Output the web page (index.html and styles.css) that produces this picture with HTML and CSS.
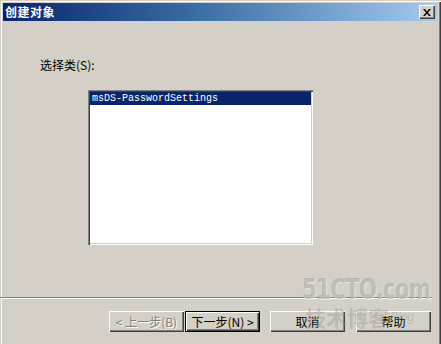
FILE: index.html
```html
<!DOCTYPE html>
<html>
<head>
<meta charset="utf-8">
<link rel="stylesheet" href="styles.css">
</head>
<body>
<div class="window">
  <div class="titlebar">
    <span class="title">创建对象</span>
    <span class="close"><svg width="8" height="7" viewBox="0 0 8 7"><path d="M0 0h2l2 2.5L6 0h2L5 3.5 8 7H6L4 4.5 2 7H0l3-3.5z" fill="#000"/></svg></span>
  </div>
  <div class="content">
    <div class="label">选择类(S):</div>
    <div class="listbox">
      <div class="item selected">msDS-PasswordSettings</div>
    </div>
  </div>
  <div class="separator"></div>
  <div class="buttons">
    <div class="btn-pair">
      <button class="btn disabled">&lt; 上一步(B)</button>
      <button class="btn default">下一步(N) &gt;</button>
    </div>
    <button class="btn cancel">取消</button>
    <button class="btn">帮助</button>
  </div>
  <div class="watermark">
    <span class="wm-big">51CTO.com</span>
    <span class="wm-small">技术博客<i>Blog</i></span>
  </div>
</div>
</body>
</html>
```
FILE: styles.css
```css
html, body {
  margin: 0;
  padding: 0;
}
body {
  width: 441px;
  height: 344px;
  overflow: hidden;
  background: #d4d0c8;
  font-family: "Noto Sans CJK SC", "Liberation Sans", sans-serif;
  font-size: 12px;
}
.window {
  position: relative;
  box-sizing: border-box;
  width: 441px;
  height: 344px;
  padding: 3px 4px 0 3px;
  background: #d4d0c8;
  box-shadow: inset 1px 1px 0 #d4d0c8, inset 2px 2px 0 #ffffff, inset -1px 0 0 #404040, inset -2px 0 0 #808080;
}
.titlebar {
  height: 18px;
  display: flex;
  align-items: center;
  justify-content: space-between;
  padding: 0 2px 0 2px;
  background: linear-gradient(to right, #0a246a 0%, #3a6ea5 45%, #a6caf0 100%);
}
.title {
  color: #ffffff;
  font-weight: bold;
  font-size: 12px;
  line-height: 14px;
  letter-spacing: 0.5px;
}
.close {
  box-sizing: border-box;
  width: 16px;
  height: 14px;
  display: flex;
  align-items: center;
  justify-content: center;
  background: #d4d0c8;
  box-shadow: inset 1px 1px 0 #ffffff, inset -1px -1px 0 #404040, inset -2px -2px 0 #808080;
}
.content {
  height: 276px;
  padding-top: 37px;
  box-sizing: border-box;
}
.label {
  margin-left: 37px;
  height: 14px;
  line-height: 14px;
  color: #000;
}
.listbox {
  box-sizing: border-box;
  margin-top: 18px;
  margin-left: 85px;
  width: 225px;
  height: 155px;
  padding: 2px;
  background: #ffffff;
  box-shadow: inset 1px 1px 0 #808080, inset 2px 2px 0 #404040, inset -1px -1px 0 #ffffff, inset -2px -2px 0 #d4d0c8;
}
.item {
  height: 13px;
  line-height: 13px;
  padding-left: 2px;
  font-family: "Liberation Mono", "DejaVu Sans Mono", monospace;
  font-size: 10px;
}
.item.selected {
  background: #0a246a;
  color: #ffffff;
}
.separator {
  height: 0;
  border-top: 1px solid #808080;
  border-bottom: 1px solid #ffffff;
  margin-right: 5px;
  margin-left: -3px;
}
.buttons {
  display: flex;
  justify-content: flex-end;
  margin-top: 12px;
  padding-right: 6px;
  gap: 11px;
}
.btn-pair {
  display: flex;
  gap: 1px;
  margin-right: -1px;
}
.btn {
  box-sizing: border-box;
  width: 75px;
  height: 21px;
  padding: 0;
  margin: 0;
  border: none;
  background: #d4d0c8;
  font-family: "Noto Sans CJK SC", "Liberation Sans", sans-serif;
  font-size: 12px;
  line-height: 21px;
  color: #000;
  box-shadow: inset 1px 1px 0 #ffffff, inset -1px -1px 0 #404040, inset -2px -2px 0 #808080;
}
.btn.disabled {
  color: #808080;
  text-shadow: 1px 1px 0 #ffffff;
}
.btn.default {
  box-shadow: inset 0 0 0 1px #000000, inset 2px 2px 0 #ffffff, inset -2px -2px 0 #404040, inset -3px -3px 0 #808080;
}
.watermark {
  position: absolute;
  left: 302px;
  top: 273px;
  width: 135px;
  pointer-events: none;
  display: flex;
  flex-direction: column;
  color: rgba(165, 163, 157, 0.6);
}
.wm-big {
  font-family: "DejaVu Sans Condensed", "Liberation Sans Narrow", sans-serif;
  font-weight: bold;
  font-size: 29px;
  line-height: 32px;
  letter-spacing: -1px;
  transform: scaleX(0.82);
  transform-origin: left;
  white-space: nowrap;
  text-shadow: 1px 1px 0 rgba(255, 255, 255, 0.5);
}
.wm-small {
  font-size: 21px;
  line-height: 24px;
  font-weight: bold;
  margin-top: 0;
  margin-left: 3px;
  white-space: nowrap;
  color: rgba(150, 148, 142, 0.4);
}
.wm-small i {
  font-family: "Liberation Sans", sans-serif;
  font-size: 12px;
  font-weight: normal;
  vertical-align: top;
  margin-left: 1px;
}
```
